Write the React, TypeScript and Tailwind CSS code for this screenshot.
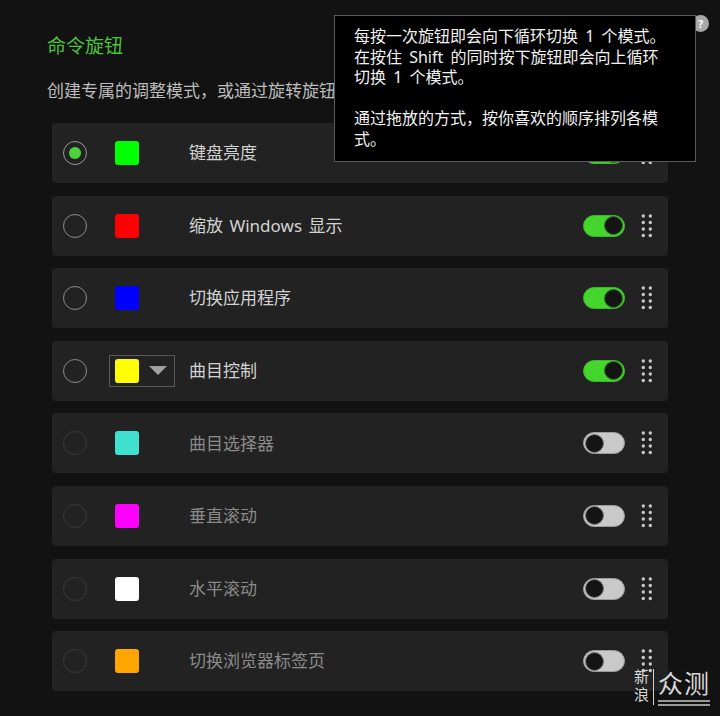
import React from "react";

type Row = { label: string; color: string; on: boolean; enabled: boolean; selected?: boolean; dropdown?: boolean };

const rows: Row[] = [
  { label: "键盘亮度", color: "#00ff00", on: true, enabled: true, selected: true },
  { label: "缩放 Windows 显示", color: "#ff0000", on: true, enabled: true },
  { label: "切换应用程序", color: "#0000ff", on: true, enabled: true },
  { label: "曲目控制", color: "#ffff00", on: true, enabled: true, dropdown: true },
  { label: "曲目选择器", color: "#40e0d0", on: false, enabled: false },
  { label: "垂直滚动", color: "#ff00ff", on: false, enabled: false },
  { label: "水平滚动", color: "#ffffff", on: false, enabled: false },
  { label: "切换浏览器标签页", color: "#ffa500", on: false, enabled: false },
];

function Radio({ selected, enabled }: { selected?: boolean; enabled: boolean }) {
  if (selected) {
    return (
      <div className="w-[24px] h-[24px] rounded-full border-[1.5px] border-[#9a9a9a] flex items-center justify-center shrink-0">
        <div className="w-[12px] h-[12px] rounded-full bg-[#4cd23a]" />
      </div>
    );
  }
  return (
    <div
      className={
        enabled
          ? "w-[24px] h-[24px] rounded-full border border-[#8a8a8a] shrink-0"
          : "w-[24px] h-[24px] rounded-full border border-[#3a3a3a] shrink-0"
      }
    />
  );
}

function Toggle({ on }: { on: boolean }) {
  if (on) {
    return (
      <div className="w-[42px] h-[22px] rounded-full bg-[#44d62c] border border-[#3fb52c] flex items-center justify-end pr-[1px] shrink-0">
        <div className="w-[19px] h-[19px] rounded-full bg-[#141414] border border-[#2a6b22]" />
      </div>
    );
  }
  return (
    <div className="w-[42px] h-[22px] rounded-full bg-[#c9c9c9] border border-[#9a9a9a] flex items-center justify-start pl-[1px] shrink-0">
      <div className="w-[19px] h-[19px] rounded-full bg-[#141414] border border-[#777]" />
    </div>
  );
}

function Handle() {
  const cys = [3, 9.5, 16, 22.5];
  return (
    <svg width="12" height="26" viewBox="0 0 12 26" className="shrink-0">
      {cys.map((cy) => (
        <g key={cy}>
          <circle cx="2.3" cy={cy} r="1.7" fill="#c8c8c8" />
          <circle cx="9.3" cy={cy} r="1.7" fill="#c8c8c8" />
        </g>
      ))}
    </svg>
  );
}

export default function App() {
  return (
    <div className="relative w-[720px] h-[716px] bg-[#121212] overflow-hidden font-['Noto_Sans','Noto_Sans_CJK_SC',sans-serif]">
      <div className="pt-[33px] pl-[47px]">
        <div className="text-[19px] leading-[26px] text-[#4cc13a]">命令旋钮</div>
        <div className="mt-[20px] text-[17px] leading-[24px] text-[#bdbdbd] whitespace-nowrap">
          创建专属的调整模式，或通过旋转旋钮
        </div>
      </div>

      <div className="mt-[20px] ml-[52px] w-[616px] flex flex-col gap-[12.6px]">
        {rows.map((r) => (
          <div key={r.label} className="h-[60px] rounded-[4px] bg-[#222222] flex items-center pl-[11px] pr-[15px]">
            <Radio selected={r.selected} enabled={r.enabled} />
            <div
              className={
                r.dropdown
                  ? "ml-[22px] w-[66px] h-[32px] border border-[#585858] flex items-center pl-[5px] shrink-0"
                  : "ml-[22px] w-[66px] h-[32px] flex items-center pl-[6px] shrink-0"
              }
            >
              <div className="w-[24px] h-[24px] rounded-[3px]" style={{ backgroundColor: r.color }} />
              {r.dropdown && (
                <svg width="18" height="10" viewBox="0 0 18 10" className="ml-[10px]">
                  <polygon points="0,0 18,0 9,9" fill="#a0a0a0" />
                </svg>
              )}
            </div>
            <div
              className={
                r.enabled
                  ? "ml-[14px] flex-1 text-[17px] text-[#d2d2d2] whitespace-nowrap [word-spacing:2px]"
                  : "ml-[14px] flex-1 text-[17px] text-[#8a8a8a] whitespace-nowrap [word-spacing:2px]"
              }
            >
              {r.label}
            </div>
            <Toggle on={r.on} />
            <div className="ml-[16px] flex">
              <Handle />
            </div>
          </div>
        ))}
      </div>

      <div className="absolute left-[692px] top-[15px] w-[17px] h-[17px] rounded-full bg-[#a8a8a8] flex items-center justify-center text-[11px] leading-none text-white font-bold">
        ?
      </div>

      <div className="absolute left-[334px] top-[15px] w-[362px] h-[147px] bg-black border border-[#5a5a5a] pl-[19px] pt-[10px] text-[16px] leading-[20.5px] text-[#f2f2f2] whitespace-nowrap [word-spacing:3px]">
        <div>每按一次旋钮即会向下循环切换 1 个模式。</div>
        <div>在按住 Shift 的同时按下旋钮即会向上循环</div>
        <div>切换 1 个模式。</div>
        <div className="h-[20.5px]" />
        <div>通过拖放的方式，按你喜欢的顺序排列各模</div>
        <div>式。</div>
      </div>

      <div className="absolute left-[632px] top-[669px] flex items-start text-[#d8d8d8]">
        <div className="text-[15px] leading-[17px] tracking-[3px] [writing-mode:vertical-rl]">新浪</div>
        <div className="ml-[4px] w-[1px] h-[36px] bg-[#cfcfcf]" />
        <div className="ml-[4px] flex flex-col">
          <span className="text-[25px] leading-[28px] tracking-[1px]">众测</span>
          <div className="mt-[3px] w-[52px] h-[2px] bg-[#9a9a9a]" />
          <div className="mt-[2px] w-[52px] h-[2px] bg-[#9a9a9a]" />
        </div>
      </div>
    </div>
  );
}
